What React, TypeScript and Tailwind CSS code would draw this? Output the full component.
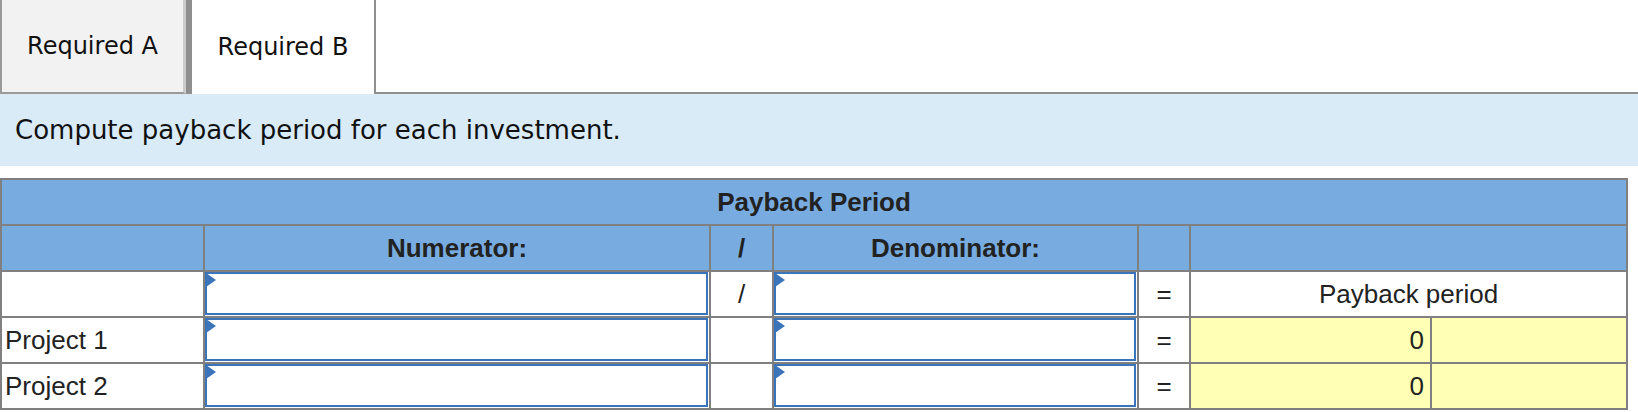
import React from 'react';

const projects = ['Project 1', 'Project 2'];

function EntryCell({ label }: { label: string }) {
  return (
    <td className="relative p-0 pr-px align-top">
      <input
        type="text"
        aria-label={label}
        className="block w-full h-[43px] border-2 border-[#3c74ba] bg-white outline-none px-2 text-[26px]"
      />
      <span className="absolute left-px top-px w-0 h-0 border-y-[7px] border-y-transparent border-l-[10px] border-l-[#3c74ba]" />
    </td>
  );
}

export default function App() {
  return (
    <div className="w-[1638px] h-[412px] overflow-hidden bg-white text-[#111] font-['DejaVu_Sans',Verdana,sans-serif]">
      <div className="flex h-[94px]">
        <button
          type="button"
          className="w-[186px] h-[94px] bg-[#f2f2f2] border-l-2 border-b-2 border-r-[3px] border-[#9a9a9a] border-r-[#cbcbcb] text-[24px] text-[#111]"
        >
          Required A
        </button>
        <button
          type="button"
          className="w-[190px] h-[94px] bg-white border-l-[6px] border-r-2 border-[#8f8f8f] text-[24px] text-[#111]"
        >
          Required B
        </button>
        <div className="flex-1 border-b-2 border-[#8f8f8f]" />
      </div>

      <div className="h-[72px] flex items-center pl-[15px] bg-[#d9ebf7] text-[26px] text-[#111]">
        Compute payback period for each investment.
      </div>

      <table className="mt-[12px] w-[1628px] table-fixed border-collapse border-2 border-[#808080] text-[26px] text-[#222] font-['Liberation_Sans',Arial,sans-serif]">
        <colgroup>
          <col className="w-[203px]" />
          <col className="w-[506px]" />
          <col className="w-[63px]" />
          <col className="w-[365px]" />
          <col className="w-[52px]" />
          <col className="w-[241px]" />
          <col className="w-[196px]" />
        </colgroup>
        <thead>
          <tr className="h-[46px] bg-[#78ace0]">
            <th colSpan={7} className="border-2 border-[#808080] font-bold">Payback Period</th>
          </tr>
          <tr className="h-[46px] bg-[#78ace0]">
            <th className="border-2 border-[#808080]" />
            <th className="border-2 border-[#808080] font-bold">Numerator:</th>
            <th className="border-2 border-[#808080] font-bold">/</th>
            <th className="border-2 border-[#808080] font-bold">Denominator:</th>
            <th className="border-2 border-[#808080]" />
            <th colSpan={2} className="border-2 border-[#808080]" />
          </tr>
        </thead>
        <tbody className="[&_td]:border-2 [&_td]:border-[#808080]">
          <tr className="h-[46px]">
            <td />
            <EntryCell label="Numerator" />
            <td className="text-center">/</td>
            <EntryCell label="Denominator" />
            <td className="text-center">=</td>
            <td colSpan={2} className="text-center">Payback period</td>
          </tr>
          {projects.map(name => (
            <tr key={name} className="h-[46px]">
              <td className="pl-[3px]">{name}</td>
              <EntryCell label={`${name} numerator`} />
              <td />
              <EntryCell label={`${name} denominator`} />
              <td className="text-center">=</td>
              <td className="bg-[#ffffb5] text-right pr-[6px]">0</td>
              <td className="bg-[#ffffb5]" />
            </tr>
          ))}
        </tbody>
      </table>
    </div>
  );
}
